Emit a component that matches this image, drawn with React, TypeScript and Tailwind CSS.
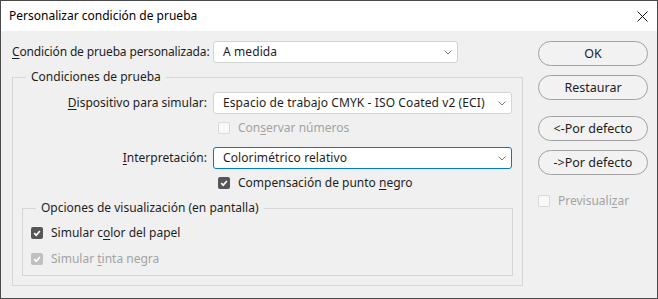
import type { ReactNode } from "react";

function Check({ checked, disabled }: { checked?: boolean; disabled?: boolean }) {
  let cls = "bg-[#f8f8f8] border border-[#dadada]";
  if (checked) cls = disabled ? "bg-[#bfbfbf]" : "bg-[#565656]";
  return (
    <span className={`w-[12px] h-[12px] rounded-[2px] flex items-center justify-center shrink-0 ${cls}`}>
      {checked && (
        <svg width="10" height="10" viewBox="0 0 10 10">
          <path d="M2.2 5.2 L4.2 7.2 L7.9 3" fill="none" stroke="#fff" strokeWidth="1.7" />
        </svg>
      )}
    </span>
  );
}

function CheckRow({
  children,
  checked,
  disabled,
  className = "",
}: {
  children: ReactNode;
  checked?: boolean;
  disabled?: boolean;
  className?: string;
}) {
  return (
    <div className={`h-[22px] flex items-center gap-[8px] ${className}`}>
      <Check checked={checked} disabled={disabled} />
      <span className={disabled ? "text-[#a3a3a3]" : ""}>{children}</span>
    </div>
  );
}

function Select({ value, width, focused }: { value: string; width: string; focused?: boolean }) {
  return (
    <div
      className={`${width} h-[22px] bg-white rounded-[3px] border flex items-center justify-between pl-[9px] pr-[5px] ${
        focused ? "border-[#0078d7]" : "border-[#d4d4d4]"
      }`}
    >
      <span className="whitespace-nowrap tracking-[0.1px]">{value}</span>
      <svg width="8" height="5" viewBox="0 0 8 5">
        <path d="M0.5 0.5 L4 4 L7.5 0.5" fill="none" stroke="#7a7a7a" strokeWidth="1" />
      </svg>
    </div>
  );
}

function Btn({ label, className = "" }: { label: string; className?: string }) {
  return (
    <button
      type="button"
      className={`w-[110px] h-[25px] rounded-full border border-[#a2a2a2] bg-[#f2f2f2] text-[12.5px] text-[#1e1e1e] ${className}`}
    >
      {label}
    </button>
  );
}

const U = ({ children }: { children: ReactNode }) => (
  <span className="underline underline-offset-2 decoration-1">{children}</span>
);

export default function App() {
  return (
    <div className="w-[658px] h-[299px] border border-[#4a4a4a] bg-[#f0f0f0] flex flex-col overflow-hidden font-['Noto_Sans',sans-serif] text-[12px] leading-[16px] text-[#1e1e1e]">
      {/* title bar */}
      <div className="h-[30px] shrink-0 bg-white flex items-center justify-between pl-[8px] pr-[9px] text-black">
        <span>Personalizar condición de prueba</span>
        <svg width="11" height="11" viewBox="0 0 11 11">
          <path d="M0.5 0.5 L10.5 10.5 M10.5 0.5 L0.5 10.5" stroke="#111" strokeWidth="1" />
        </svg>
      </div>

      <div className="flex pl-[11px] pt-[10px]">
        {/* left column */}
        <div className="w-[511px]">
          <div className="flex items-center h-[22px]">
            <span className="w-[201px] whitespace-nowrap tracking-[-0.15px]">
              <U>C</U>ondición de prueba personalizada:
            </span>
            <Select value="A medida" width="w-[245px]" />
          </div>

          <fieldset className="mt-[6px] w-[511px] border border-[#d6d6d6] pt-[7px] pb-[9px]">
            <legend className="ml-[13px] px-[5px]">Condiciones de prueba</legend>

            <div className="flex items-center h-[22px]">
              <span className="w-[194px] text-right whitespace-nowrap">
                <U>D</U>ispositivo para simular:
              </span>
              <span className="w-[6px]" />
              <Select value="Espacio de trabajo CMYK - ISO Coated v2 (ECI)" width="w-[299px]" />
            </div>

            <CheckRow disabled className="mt-[3px] ml-[205px]">
              Con<U>s</U>ervar números
            </CheckRow>

            <div className="flex items-center h-[22px] mt-[8px]">
              <span className="w-[194px] text-right whitespace-nowrap">
                <U>I</U>nterpretación:
              </span>
              <span className="w-[6px]" />
              <Select value="Colorimétrico relativo" width="w-[299px]" focused />
            </div>

            <CheckRow checked className="mt-[3px] ml-[205px]">
              Compensación de punto <U>n</U>egro
            </CheckRow>

            <fieldset className="mt-[6px] ml-[9px] w-[491px] border border-[#d6d6d6] pt-[6px] pb-[5px] pl-[8px]">
              <legend className="ml-[5px] px-[5px]">Opciones de visualización (en pantalla)</legend>
              <CheckRow checked>
                Simular c<U>o</U>lor del papel
              </CheckRow>
              <CheckRow checked disabled className="mt-[4px]">
                Simular <U>t</U>inta negra
              </CheckRow>
            </fieldset>
          </fieldset>
        </div>

        {/* right column */}
        <div className="ml-[15px] flex flex-col">
          <Btn label="OK" />
          <Btn label="Restaurar" className="mt-[9px]" />
          <Btn label="<-Por defecto" className="mt-[16px]" />
          <Btn label="->Por defecto" className="mt-[9px]" />
          <div className="mt-[18px] h-[16px] flex items-center gap-[8px]">
            <Check disabled />
            <span className="text-[#a3a3a3]">
              Previsuali<U>z</U>ar
            </span>
          </div>
        </div>
      </div>
    </div>
  );
}
